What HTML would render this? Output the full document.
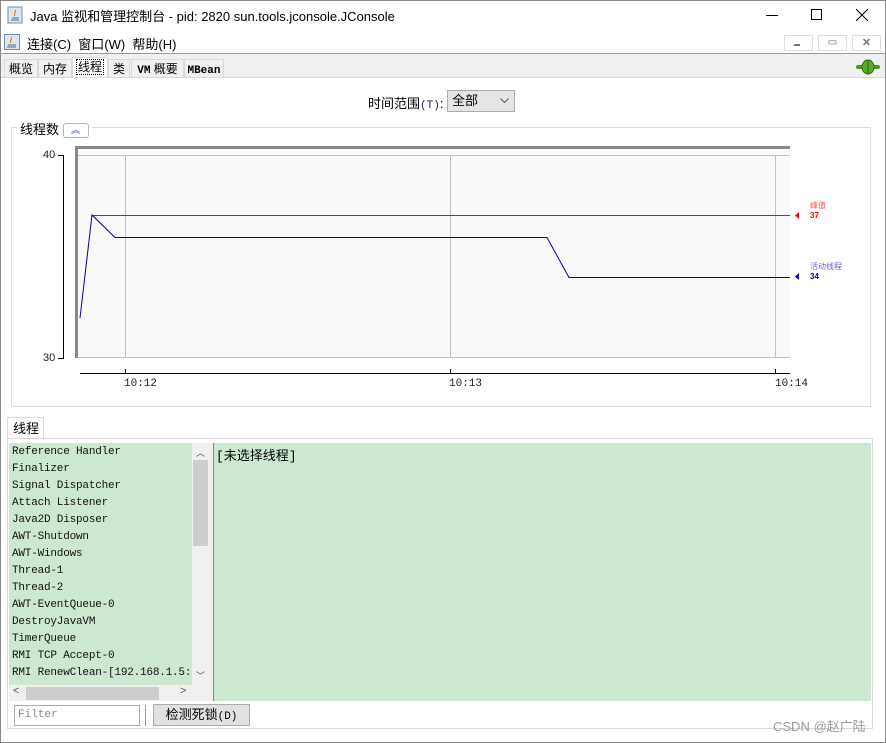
<!DOCTYPE html>
<html><head><meta charset="utf-8"><style>
body{margin:0;width:886px;height:743px;overflow:hidden;background:#fff;font-family:"Liberation Sans","Noto Sans CJK SC",sans-serif;position:relative}
.a{position:absolute}
.mono{font-family:"Liberation Mono","Noto Sans CJK SC",monospace}
.tab{position:absolute;top:59px;height:18px;border:1px solid #d9d9d9;border-bottom:none;background:#f0f0f0;font-size:12px;line-height:18px;text-align:center}
.li{position:absolute;left:12px;font-family:"Liberation Mono",monospace;font-size:11px;color:#111;letter-spacing:-0.2px}
</style></head><body>
<div class="a" style="left:0;top:0;width:884px;height:741px;border:1px solid #888"></div>
<svg class="a" style="left:7px;top:6px" width="16" height="18"><rect x="1" y="1" width="14" height="16" fill="#dde6f0" stroke="#7a8ea5"/><path d="M5 12h7M4 14h8" stroke="#4a6b8a"/><path d="M8 4c2 2-2 3 0 6" stroke="#e07020" fill="none"/></svg>
<div class="a" style="left:30px;top:6px;font-size:13px;color:#000">Java 监视和管理控制台 - pid: 2820 sun.tools.jconsole.JConsole</div>
<div class="a" style="left:766px;top:15px;width:12px;height:1px;background:#000"></div>
<div class="a" style="left:811px;top:9px;width:9px;height:9px;border:1px solid #000"></div>
<svg class="a" style="left:856px;top:9px" width="12" height="12"><path d="M0 0L12 12M12 0L0 12" stroke="#000"/></svg>
<svg class="a" style="left:4px;top:34px" width="16" height="16"><rect x="0.5" y="0.5" width="15" height="15" fill="#dde6f0" stroke="#7a8ea5"/><path d="M4 11h8M3 13h9" stroke="#4a6b8a"/><path d="M7 3c2 2-2 3 0 6" stroke="#e07020" fill="none"/></svg>
<div class="a" style="left:27px;top:34px;font-size:13px">连接(C)&nbsp;&nbsp;窗口(W)&nbsp;&nbsp;帮助(H)</div>
<div class="a" style="left:784px;top:35px;width:27px;height:14px;border:1px solid #ddd"></div><div class="a" style="left:794px;top:44px;width:6px;height:2px;background:#777"></div>
<div class="a" style="left:818px;top:35px;width:27px;height:14px;border:1px solid #ddd;font-size:10px;text-align:center;color:#666;line-height:14px">▭</div>
<div class="a" style="left:852px;top:35px;width:27px;height:14px;border:1px solid #ddd;font-size:11px;text-align:center;color:#777;line-height:14px;font-weight:bold">✕</div>
<div class="a" style="left:0;top:53px;width:886px;height:1px;background:#999"></div>
<div class="a" style="left:1px;top:54px;width:884px;height:24px;background:#f0f0f0"></div>
<div class="tab" style="left:4px;width:32px">概览</div>
<div class="tab" style="left:38px;width:32px">内存</div>
<div class="tab" style="left:72px;width:34px;background:#fff;top:57px;height:20px"><span style="border:1px dotted #000;padding:0 1px">线程</span></div>
<div class="tab" style="left:108px;width:20px">类</div>
<div class="tab" style="left:131px;width:51px"><span class="mono" style="font-size:11px;font-weight:bold">VM</span> 概要</div>
<div class="tab" style="left:184px;width:38px"><span class="mono" style="font-size:11px;font-weight:bold">MBean</span></div>
<svg class="a" style="left:856px;top:59px" width="24" height="16"><rect x="0" y="6" width="24" height="4" rx="2" fill="#4a9a20"/><ellipse cx="12" cy="8" rx="6" ry="7" fill="#5aaa28" stroke="#2a6a10"/><path d="M12 1v14" stroke="#2a6a10"/></svg>
<div class="a" style="left:1px;top:77px;width:884px;height:1px;background:#d9d9d9"></div>
<div class="a" style="left:368px;top:93px;font-size:13px">时间范围<span class="mono" style="font-size:11px;color:#225">(T)</span>:</div>
<div class="a" style="left:447px;top:90px;width:66px;height:20px;border:1px solid #adadad;background:#e5e5e5;font-size:13px;line-height:20px;text-indent:4px">全部<svg style="position:absolute;right:5px;top:7px" width="9" height="6"><path d="M0.5 0.5L4.5 4.5L8.5 0.5" stroke="#555" fill="none"/></svg></div>
<div class="a" style="left:11px;top:127px;width:858px;height:278px;border:1px solid #ddd"></div>
<div class="a" style="left:17px;top:119px;background:#fff;padding:0 3px;font-size:13px">线程数 <span style="display:inline-block;width:24px;height:13px;border:1px solid #a8b8d0;border-radius:3px;font-size:9px;text-align:center;line-height:13px;color:#1a4aa8;vertical-align:1px">︽</span></div>
<svg class="a" style="left:0;top:0" width="886" height="400">
<rect x="76" y="148" width="714" height="210" fill="#f9f9f9"/>
<path d="M76.5 358V147.5H790" stroke="#888" stroke-width="3" fill="none"/>
<path d="M78 155.5H790M78 357.5H790M125.5 155V358M450.5 155V358M775.5 155V358" stroke="#c0c0c0"/>
<path d="M63.5 155V359M58 155.5H63M58 358.5H63M80 373.5H790M125.5 369V374M450.5 369V374M775.5 369V374" stroke="#000"/>
<path d="M92 215.5H790" stroke="#f00"/>
<path d="M80 318L92 215L115 237.5H547L569 277.5H790" stroke="#00a" fill="none"/>
<path d="M799 212v7l-4-3.5z" fill="#f00"/><path d="M799 273v7l-4-3.5z" fill="#00a"/>
</svg>
<div class="a" style="left:43px;top:149px;font-size:11px;color:#222">40</div>
<div class="a" style="left:43px;top:352px;font-size:11px;color:#222">30</div>
<div class="a mono" style="left:124px;top:378px;font-size:11px;color:#222">10:12</div>
<div class="a mono" style="left:449px;top:378px;font-size:11px;color:#222">10:13</div>
<div class="a mono" style="left:775px;top:378px;font-size:11px;color:#222">10:14</div>
<div class="a" style="left:810px;top:201px;font-size:8px;color:#f55;line-height:10px">峰值<br><b style="color:#f00">37</b></div>
<div class="a" style="left:810px;top:262px;font-size:8px;color:#66c;line-height:10px">活动线程<br><b style="color:#00a">34</b></div>
<div class="a" style="left:7px;top:417px;width:35px;height:21px;border:1px solid #d9d9d9;border-bottom:none;font-size:13px;line-height:21px;text-indent:5px">线程</div>
<div class="a" style="left:7px;top:438px;width:864px;height:289px;border:1px solid #d9d9d9"></div>
<div class="a" style="left:9px;top:443px;width:183px;height:242px;background:#cde8d0"></div>
<div class="a" style="left:192px;top:443px;width:17px;height:242px;background:#f0f0f0"></div>
<div class="a" style="left:193px;top:460px;width:15px;height:86px;background:#cdcdcd"></div>
<div class="a" style="left:196px;top:446px;font-size:9px;color:#555">︿</div>
<div class="a" style="left:196px;top:669px;font-size:9px;color:#555">﹀</div>
<div class="a" style="left:9px;top:685px;width:200px;height:16px;background:#f0f0f0"></div>
<div class="a" style="left:26px;top:687px;width:133px;height:13px;background:#cdcdcd"></div>
<div class="a" style="left:13px;top:685px;font-size:11px;color:#555">&lt;</div>
<div class="a" style="left:180px;top:685px;font-size:11px;color:#555">&gt;</div>
<div class="a" style="left:209px;top:443px;width:4px;height:258px;background:#f0f0f0;border-right:1px solid #888"></div>
<div class="a" style="left:214px;top:443px;width:657px;height:258px;background:#cde8d0"></div>
<div class="a" style="left:216px;top:445px;font-size:13px;font-family:'Liberation Mono','Noto Sans CJK SC',monospace">[未选择线程]</div>
<div class="li" style="top:446px">Reference Handler</div>
<div class="li" style="top:463px">Finalizer</div>
<div class="li" style="top:480px">Signal Dispatcher</div>
<div class="li" style="top:497px">Attach Listener</div>
<div class="li" style="top:514px">Java2D Disposer</div>
<div class="li" style="top:531px">AWT-Shutdown</div>
<div class="li" style="top:548px">AWT-Windows</div>
<div class="li" style="top:565px">Thread-1</div>
<div class="li" style="top:582px">Thread-2</div>
<div class="li" style="top:599px">AWT-EventQueue-0</div>
<div class="li" style="top:616px">DestroyJavaVM</div>
<div class="li" style="top:633px">TimerQueue</div>
<div class="li" style="top:650px">RMI TCP Accept-0</div>
<div class="li" style="top:667px;width:178px;overflow:hidden;white-space:nowrap">RMI RenewClean-[192.168.1.5:83</div>
<div class="a" style="left:14px;top:705px;width:124px;height:19px;border:1px solid #aaa;font-family:'Liberation Mono',monospace;font-size:11px;color:#888;line-height:19px;text-indent:3px">Filter</div>
<div class="a" style="left:145px;top:705px;width:1px;height:21px;background:#999"></div>
<div class="a" style="left:153px;top:704px;width:95px;height:20px;border:1px solid #adadad;background:#e1e1e1;font-size:13px;text-align:center;line-height:20px">检测死锁<span class="mono" style="font-size:11px">(D)</span></div>
<div class="a" style="left:773px;top:716px;font-size:13px;color:#999">CSDN @赵广陆</div>
</body></html>
